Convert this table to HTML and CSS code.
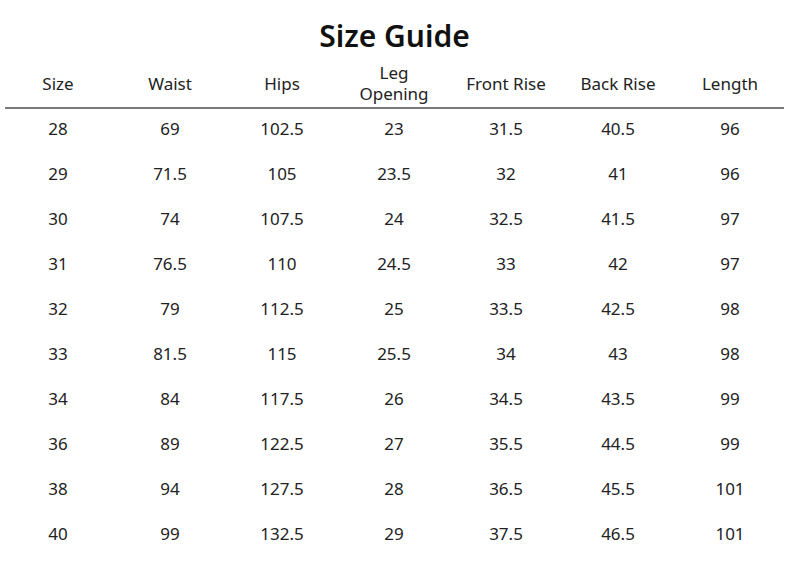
FILE: index.html
```html
<!DOCTYPE html>
<html>
<head>
<meta charset="utf-8">
<link rel="stylesheet" href="styles.css">
</head>
<body>
<h1 class="title">Size Guide</h1>
<div class="table">
  <div class="row head">
    <div class="cell">Size</div>
    <div class="cell">Waist</div>
    <div class="cell">Hips</div>
    <div class="cell">Leg<br>Opening</div>
    <div class="cell">Front Rise</div>
    <div class="cell">Back Rise</div>
    <div class="cell">Length</div>
  </div>
  <div class="rule"></div>
  <div class="rows">
    <div class="row"><div class="cell">28</div><div class="cell">69</div><div class="cell">102.5</div><div class="cell">23</div><div class="cell">31.5</div><div class="cell">40.5</div><div class="cell">96</div></div>
    <div class="row"><div class="cell">29</div><div class="cell">71.5</div><div class="cell">105</div><div class="cell">23.5</div><div class="cell">32</div><div class="cell">41</div><div class="cell">96</div></div>
    <div class="row"><div class="cell">30</div><div class="cell">74</div><div class="cell">107.5</div><div class="cell">24</div><div class="cell">32.5</div><div class="cell">41.5</div><div class="cell">97</div></div>
    <div class="row"><div class="cell">31</div><div class="cell">76.5</div><div class="cell">110</div><div class="cell">24.5</div><div class="cell">33</div><div class="cell">42</div><div class="cell">97</div></div>
    <div class="row"><div class="cell">32</div><div class="cell">79</div><div class="cell">112.5</div><div class="cell">25</div><div class="cell">33.5</div><div class="cell">42.5</div><div class="cell">98</div></div>
    <div class="row"><div class="cell">33</div><div class="cell">81.5</div><div class="cell">115</div><div class="cell">25.5</div><div class="cell">34</div><div class="cell">43</div><div class="cell">98</div></div>
    <div class="row"><div class="cell">34</div><div class="cell">84</div><div class="cell">117.5</div><div class="cell">26</div><div class="cell">34.5</div><div class="cell">43.5</div><div class="cell">99</div></div>
    <div class="row"><div class="cell">36</div><div class="cell">89</div><div class="cell">122.5</div><div class="cell">27</div><div class="cell">35.5</div><div class="cell">44.5</div><div class="cell">99</div></div>
    <div class="row"><div class="cell">38</div><div class="cell">94</div><div class="cell">127.5</div><div class="cell">28</div><div class="cell">36.5</div><div class="cell">45.5</div><div class="cell">101</div></div>
    <div class="row"><div class="cell">40</div><div class="cell">99</div><div class="cell">132.5</div><div class="cell">29</div><div class="cell">37.5</div><div class="cell">46.5</div><div class="cell">101</div></div>
  </div>
</div>
</body>
</html>
```
FILE: styles.css
```css
html, body {
  margin: 0;
  padding: 0;
  background: #ffffff;
}
body {
  width: 789px;
  height: 581px;
  font-family: "Noto Sans", "Open Sans", sans-serif;
  color: #222222;
  overflow: hidden;
}
.title {
  margin: 0;
  padding-top: 13px;
  height: 46px;
  font-size: 30px;
  line-height: 46px;
  font-weight: 600;
  text-align: center;
  color: #111111;
}
.table {
  padding-left: 2px;
}
.row {
  display: grid;
  grid-template-columns: repeat(7, 112px);
  height: 45px;
  align-items: center;
}
.row.head {
  height: 48px;
}
.rows {
  margin-top: -3px;
}
.cell {
  text-align: center;
  font-size: 17px;
  line-height: 21px;
}
.rule {
  margin-left: 3px;
  width: 779px;
  height: 2px;
  background: #7a7a7a;
}
```
